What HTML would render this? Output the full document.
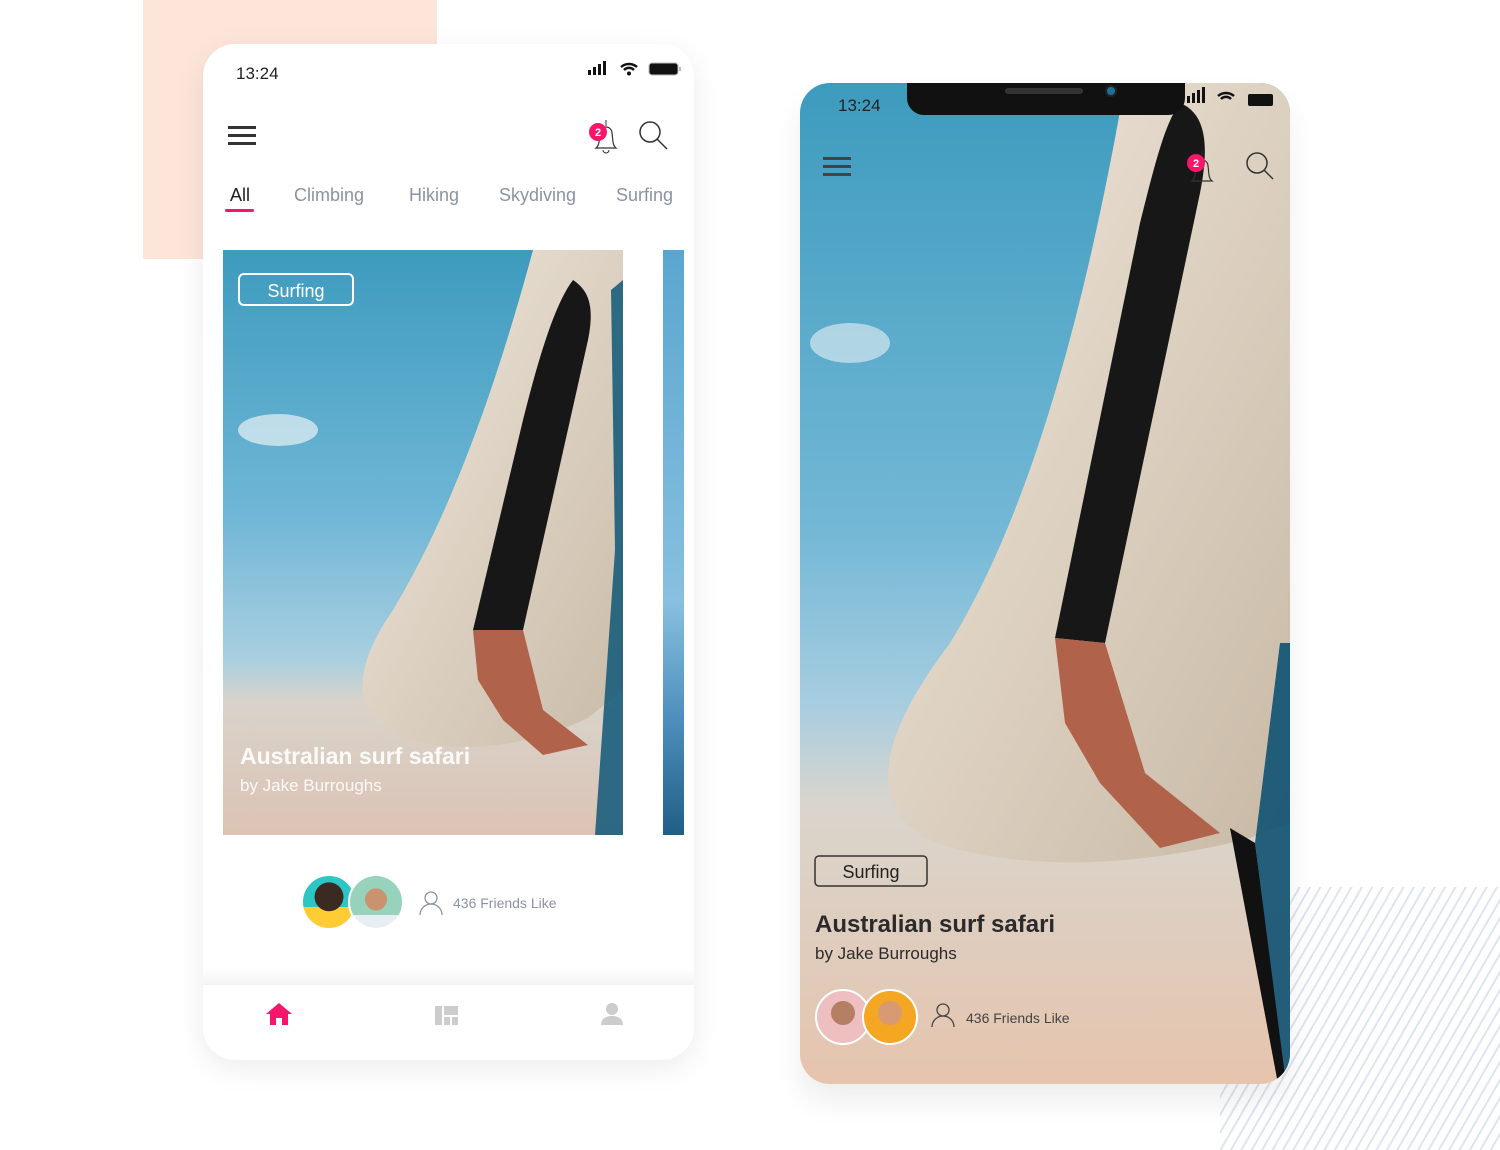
<!DOCTYPE html>
<html><head><meta charset="utf-8">
<style>
*{margin:0;padding:0;box-sizing:border-box}
body{width:1500px;height:1150px;background:#fff;position:relative;overflow:hidden;font-family:"Liberation Sans",sans-serif}
.abs{position:absolute}
.peach{left:143px;top:0;width:294px;height:259px;background:#fde5da}
.stripes{left:1220px;top:887px;width:280px;height:263px;background:repeating-linear-gradient(-60deg,#fff 0 7px,#dfe4f1 7px 9px)}
.ph1{left:203px;top:44px;width:491px;height:1016px;background:#fff;border-radius:32px;box-shadow:0 8px 30px rgba(0,0,0,.08);overflow:hidden}
.ph2{left:800px;top:83px;width:490px;height:1001px;border-radius:30px;overflow:hidden;box-shadow:0 18px 30px rgba(0,0,0,.07)}
.t{color:#222;font-size:17px}
.tab{position:absolute;top:141px;font-size:18px;color:#8a93a3}
</style></head><body>
<div class="abs peach"></div>
<div class="abs stripes"></div>

<div class="abs ph1">
  <div class="abs t" style="left:33px;top:20px">13:24</div>
  <svg class="abs" style="left:384px;top:16px" width="96" height="20" viewBox="0 0 96 20">
    <rect x="1" y="10" width="3" height="5" fill="#111"/><rect x="6" y="7" width="3" height="8" fill="#111"/><rect x="11" y="4" width="3" height="11" fill="#111"/><rect x="16" y="1" width="3" height="14" fill="#111"/>
    <path d="M34 7a12 12 0 0 1 16 0M37 10a7 7 0 0 1 10 0" stroke="#111" stroke-width="2.5" fill="none"/><circle cx="42" cy="13.5" r="2" fill="#111"/>
    <rect x="62" y="3" width="29" height="12" rx="3" fill="#111" stroke="#bbb" stroke-width="1"/><rect x="92" y="7" width="2" height="4" fill="#bbb"/>
  </svg>
  <div class="abs" style="left:25px;top:82px;width:28px;height:3px;background:#333;box-shadow:0 8px 0 #333,0 16px 0 #333"></div>
  <svg class="abs" style="left:382px;top:72px" width="90" height="40" viewBox="0 0 90 40">
    <path d="M11 32c4-3 3-10 4-15a6 6 0 0 1 12 0c1 5 0 12 4 15z" stroke="#333" fill="none" stroke-width="1.2"/><path d="M18 34a3 3 0 0 0 6 0" stroke="#333" fill="none"/><line x1="21" y1="4" x2="21" y2="10" stroke="#333"/>
    <circle cx="13" cy="16" r="9" fill="#f5176a"/><text x="13" y="20" font-size="11" font-weight="bold" fill="#fff" text-anchor="middle" font-family="Liberation Sans">2</text>
    <circle cx="65" cy="16" r="10" stroke="#333" stroke-width="1.5" fill="none"/><line x1="72" y1="23" x2="82" y2="33" stroke="#333" stroke-width="1.5"/>
  </svg>
  <div class="tab" style="left:27px;color:#222">All</div>
  <div class="abs" style="left:22px;top:165px;width:29px;height:3px;background:#f5176a;border-radius:2px"></div>
  <div class="tab" style="left:91px">Climbing</div>
  <div class="tab" style="left:206px">Hiking</div>
  <div class="tab" style="left:296px">Skydiving</div>
  <div class="tab" style="left:413px">Surfing</div>

  <svg class="abs" style="left:20px;top:206px" width="400" height="585" viewBox="0 0 400 585">
    <defs><linearGradient id="s1" x1="0" y1="0" x2="0" y2="1"><stop offset="0" stop-color="#3d9bbe"/><stop offset=".45" stop-color="#6fb6d6"/><stop offset=".7" stop-color="#a9cfe0"/><stop offset=".77" stop-color="#d8d3cb"/><stop offset="1" stop-color="#dcc3b4"/></linearGradient>
    <linearGradient id="b1" x1="0" y1="0" x2="1" y2="1"><stop offset="0" stop-color="#f0e8dc"/><stop offset="1" stop-color="#c9bba8"/></linearGradient></defs>
    <rect width="400" height="585" fill="url(#s1)"/>
    <ellipse cx="55" cy="180" rx="40" ry="16" fill="#e8f1f5" opacity=".7"/>
    <path d="M310 0C275 130 230 260 170 360C125 425 130 470 185 490C240 505 310 495 365 468L400 440V0Z" fill="url(#b1)"/>
    <path d="M350 30C365 40 372 55 365 90L300 380L250 380L300 170C320 90 335 50 350 30Z" fill="#171717"/>
    <path d="M250 380L300 380L320 460L365 495L320 505L280 470L255 430Z" fill="#b0634a"/>
    <path d="M388 40L400 30V585H372L392 300Z" fill="#0f5778" opacity=".85"/>
    <rect x="16" y="24" width="114" height="31" rx="5" fill="none" stroke="#fff" stroke-width="2"/>
    <text x="73" y="47" fill="#fff" font-size="18" text-anchor="middle" font-family="Liberation Sans">Surfing</text>
    <text x="17" y="514" fill="#fff" font-size="23" font-weight="bold" font-family="Liberation Sans" opacity=".9">Australian surf safari</text>
    <text x="17" y="541" fill="#fff" font-size="17" font-family="Liberation Sans" opacity=".9">by Jake Burroughs</text>
  </svg>
  <div class="abs" style="left:460px;top:206px;width:21px;height:585px;background:linear-gradient(#5aa6d0,#88c0df 60%,#4e8fbd 80%,#1f5f86)"></div>

  <div class="abs" style="left:98px;top:830px;width:56px;height:56px;border-radius:50%;background:radial-gradient(circle at 50% 40%,#3a2a22 0 35%,transparent 36%),linear-gradient(#2cc6c4 60%,#ffcc33 60%);border:2px solid #fff"></div>
  <div class="abs" style="left:145px;top:830px;width:56px;height:56px;border-radius:50%;background:radial-gradient(circle at 50% 45%,#c9936f 0 28%,transparent 29%),linear-gradient(#97d2bd 75%,#e9eef3 75%);border:2px solid #fff"></div>
  <svg class="abs" style="left:215px;top:846px" width="26" height="26" viewBox="0 0 26 26"><circle cx="13" cy="8" r="6" stroke="#8a93a3" fill="none" stroke-width="1.3"/><path d="M2 25a11 11 0 0 1 22 0" stroke="#8a93a3" fill="none" stroke-width="1.3"/></svg>
  <div class="abs" style="left:250px;top:851px;font-size:14px;color:#8a93a3">436 Friends Like</div>

  <div class="abs" style="left:0;top:925px;width:491px;height:16px;background:linear-gradient(#fff,#f3f3f3)"></div>
  <svg class="abs" style="left:63px;top:958px" width="26" height="24" viewBox="0 0 26 24"><path d="M13 1L0 12h4v11h6v-7h6v7h6V12h4z" fill="#f5176a"/></svg>
  <svg class="abs" style="left:232px;top:962px" width="24" height="20" viewBox="0 0 24 20"><rect width="7" height="19" fill="#ccc"/><rect x="9" width="14" height="9" fill="#ccc"/><rect x="9" y="11" width="6" height="8" fill="#ccc"/><rect x="17" y="11" width="6" height="8" fill="#ccc"/></svg>
  <svg class="abs" style="left:398px;top:958px" width="22" height="24" viewBox="0 0 22 24"><circle cx="11" cy="7" r="6" fill="#ccc"/><path d="M0 23c0-6 4-9 11-9s11 3 11 9z" fill="#ccc"/></svg>
</div>

<div class="abs ph2">
  <svg class="abs" style="left:0;top:0" width="490" height="1001" viewBox="0 0 490 1001">
    <defs><linearGradient id="s2" x1="0" y1="0" x2="0" y2="1"><stop offset="0" stop-color="#3d9bbe"/><stop offset=".45" stop-color="#74b8d6"/><stop offset=".62" stop-color="#a7cde0"/><stop offset=".72" stop-color="#d9d5cd"/><stop offset="1" stop-color="#e6c4ad"/></linearGradient>
    <linearGradient id="b2" x1="0" y1="0" x2="1" y2="1"><stop offset="0" stop-color="#f1e8dc"/><stop offset="1" stop-color="#c8b9a5"/></linearGradient></defs>
    <rect width="490" height="1001" fill="url(#s2)"/>
    <ellipse cx="50" cy="260" rx="40" ry="20" fill="#e8f1f5" opacity=".6"/>
    <path d="M325 0C285 230 230 430 150 560C75 660 70 720 125 755C210 790 335 785 450 755L490 740V0Z" fill="url(#b2)"/>
    <path d="M380 20C405 30 410 60 400 110L305 560L255 555L340 140C355 80 365 40 380 20Z" fill="#171717"/>
    <path d="M255 555L305 560L345 690L420 750L360 765L300 700L265 640Z" fill="#b0634a"/>
    <path d="M490 560V1001H485L455 760L480 560Z" fill="#0e5172" opacity=".9"/>
    <path d="M430 745L455 760L486 1001H478Z" fill="#111"/>
    <path d="M107 0H385V15a17 17 0 0 1-17 17H124a17 17 0 0 1-17-17Z" fill="#111"/>
    <rect x="205" y="5" width="78" height="6" rx="3" fill="#333"/><circle cx="311" cy="8" r="5" fill="#1f6f9a" stroke="#222" stroke-width="2"/>
    <rect x="387" y="13" width="3" height="7" fill="#111"/><rect x="392" y="10" width="3" height="10" fill="#111"/><rect x="397" y="7" width="3" height="13" fill="#111"/><rect x="402" y="4" width="3" height="16" fill="#111"/>
    <path d="M418 13a12 12 0 0 1 16 0M421 16a7 7 0 0 1 10 0" stroke="#111" stroke-width="2.5" fill="none"/>
    <rect x="448" y="11" width="25" height="12" rx="2" fill="#111"/>
    <rect x="23" y="74" width="28" height="3" fill="#444"/><rect x="23" y="82" width="28" height="3" fill="#444"/><rect x="23" y="90" width="28" height="3" fill="#444"/>
    <path d="M392 98c4-3 3-10 4-15a6 6 0 0 1 12 0c1 5 0 12 4 15z" stroke="#333" fill="none" stroke-width="1.2"/><line x1="402" y1="67" x2="402" y2="72" stroke="#333"/>
    <circle cx="396" cy="80" r="9" fill="#f5176a"/><text x="396" y="84" font-size="11" font-weight="bold" fill="#fff" text-anchor="middle" font-family="Liberation Sans">2</text>
    <circle cx="457" cy="80" r="10" stroke="#333" stroke-width="1.5" fill="none"/><line x1="464" y1="87" x2="473" y2="96" stroke="#333" stroke-width="1.5"/>
    <text x="38" y="28" font-size="17" fill="#222" font-family="Liberation Sans">13:24</text>
    <rect x="15" y="773" width="112" height="30" rx="4" fill="none" stroke="#333" stroke-width="1.5"/>
    <text x="71" y="795" fill="#222" font-size="18" text-anchor="middle" font-family="Liberation Sans">Surfing</text>
    <text x="15" y="849" fill="#2b2b2b" font-size="24" font-weight="bold" font-family="Liberation Sans">Australian surf safari</text>
    <text x="15" y="876" fill="#2b2b2b" font-size="17" font-family="Liberation Sans">by Jake Burroughs</text>
    <circle cx="43" cy="934" r="27" fill="#eebfc0" stroke="#fff" stroke-width="2"/><circle cx="43" cy="930" r="12" fill="#b57f63"/>
    <circle cx="90" cy="934" r="27" fill="#f5a623" stroke="#fff" stroke-width="2"/><circle cx="90" cy="930" r="12" fill="#d79a72"/>
    <circle cx="143" cy="927" r="6" stroke="#444" fill="none" stroke-width="1.3"/><path d="M132 944a11 11 0 0 1 22 0" stroke="#444" fill="none" stroke-width="1.3"/>
    <text x="166" y="940" fill="#444" font-size="14" font-family="Liberation Sans">436 Friends Like</text>
  </svg>
</div>
</body></html>
